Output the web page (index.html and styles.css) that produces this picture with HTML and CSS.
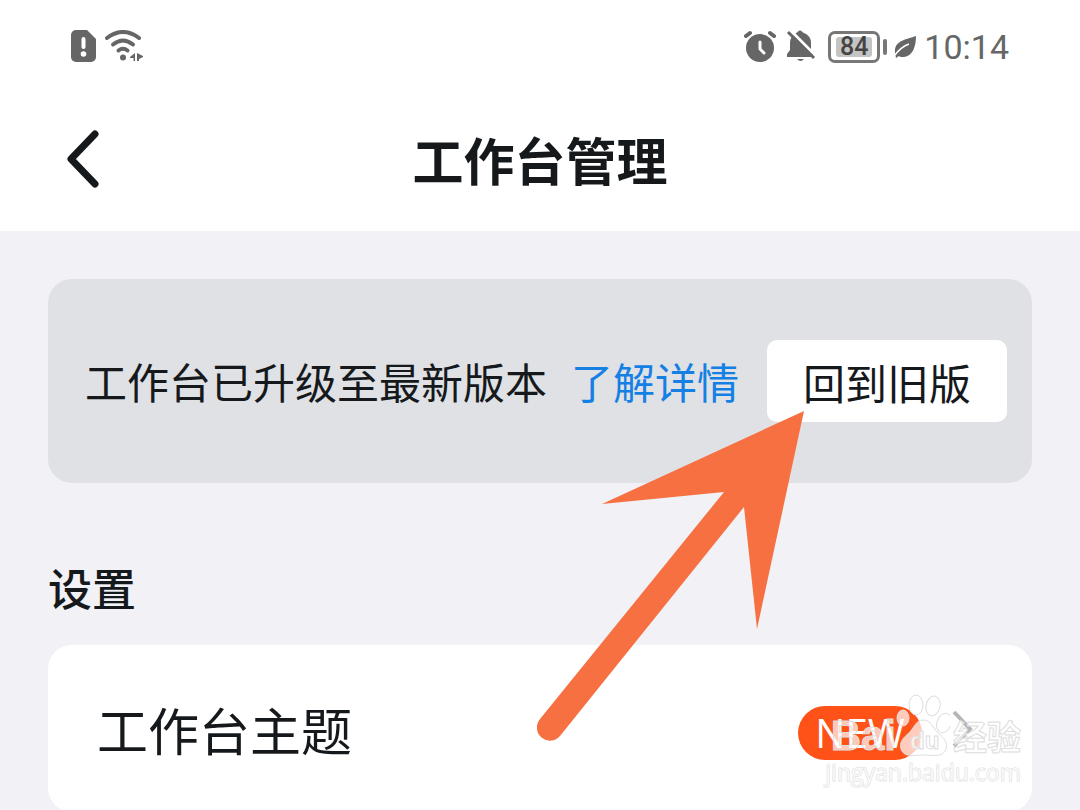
FILE: index.html
```
<!DOCTYPE html>
<html lang="zh-CN">
<head>
    <meta charset="UTF-8">
    <meta name="viewport" content="width=device-width, initial-scale=1.0">
    <title>工作台管理</title>
    <link rel="stylesheet" href="styles.css">
</head>
<body>
    <header class="top">
        <div class="status-bar">
            <div class="status-left">
                <svg width="26" height="34" viewBox="0 0 26 34" aria-hidden="true">
                    <path fill="#666" d="M5 0h11l9 9v18a5 5 0 0 1-5 5H5a5 5 0 0 1-5-5V5a5 5 0 0 1 5-5z"/>
                    <path stroke="#fff" stroke-width="4" stroke-linecap="round" d="M12.500 9v8"/>
                    <circle cx="12.500" cy="24" r="2.800" fill="#fff"/>
                </svg>
                <svg width="38" height="34" viewBox="0 0 38 34" aria-hidden="true">
                    <g fill="none" stroke="#666" stroke-width="4" stroke-linecap="round">
                        <path d="M2 8Q18-4 34 8"/>
                        <path d="M8 14.500Q18 6.500 28 14.500"/>
                        <path d="M13.500 20.500q4.500-3.500 9 0"/>
                    </g>
                    <circle cx="18" cy="27.500" r="3" fill="#666"/>
                    <path fill="#666" d="M30 23v8h-1.500v-3H25v-1zM32 23l6 3v1l-4 2v2h-2z"/>
                </svg>
            </div>
            <div class="status-right">
                <svg width="34" height="34" viewBox="0 0 34 34" aria-hidden="true">
                    <circle cx="16" cy="18" r="14" fill="#666"/>
                    <path stroke="#666" stroke-width="4" stroke-linecap="round" d="M2 6l4-3M30 6l-4-3"/>
                    <path fill="none" stroke="#fff" stroke-width="3" stroke-linecap="round" stroke-linejoin="round" d="M16 12v7l4 4"/>
                </svg>
                <svg width="30" height="34" viewBox="0 0 30 34" aria-hidden="true">
                    <path fill="#666" d="M1 27v-3l3-4v-7q0-7 7-10.500q3-4 6 0 8 3 8 10.500v8l2 3v3z"/>
                    <path fill="#666" d="M11 29h7q-3.500 4-7 0z"/>
                    <path stroke="#fff" stroke-width="3" d="M4 0l26 26"/>
                    <path stroke="#666" stroke-width="3" d="M2 2l26 26"/>
                </svg>
                <span class="battery"><span class="battery-level">84</span></span>
                <svg class="leaf" width="22" height="24" viewBox="0 0 22 24" aria-hidden="true">
                    <path fill="#666" d="M1 18C0 6 10 5 22 1c0 10-3 20-12 21-3 0-4 0-5-1L2 23z"/>
                    <path fill="none" stroke="#fff" stroke-width="1.600" d="M1 20Q7 12 15 9"/>
                </svg>
                <time class="clock">10:14</time>
            </div>
        </div>
        <div class="nav">
            <button type="button" class="back" aria-label="返回">
                <svg width="36" height="58" viewBox="0 0 36 58" aria-hidden="true">
                    <path fill="none" stroke="#16191c" stroke-width="7" stroke-linecap="round" stroke-linejoin="round" d="M31 4L7 29l24 25"/>
                </svg>
            </button>
            <h1>工作台管理</h1>
        </div>
    </header>

    <main>
        <section class="notice">
            <p>工作台已升级至最新版本</p>
            <a href="#">了解详情</a>
            <button type="button" class="old-version">回到旧版</button>
            <svg class="arrow" width="268" height="330" viewBox="0 0 268 330" aria-hidden="true">
                <path fill="#f77041" d="M267 0L65 93l122-12L3 308a13 13 0 0 0 20 17L207 96l13 122z"/>
            </svg>
        </section>

        <h2>设置</h2>
        <section class="card">
            <a class="row" href="#">
                <span>工作台主题</span>
                <span class="new">NEW</span>
                <svg width="21" height="40" viewBox="0 0 21 40" aria-hidden="true">
                    <path fill="none" stroke="#b4b6b8" stroke-width="4" d="M2 3l16 17L2 37"/>
                </svg>
            </a>
            <div class="watermark">
                <div class="brand">
                    <span class="bai">Bai</span>
                    <span class="paw">
                        <svg width="54" height="64" viewBox="0 0 54 64" aria-hidden="true">
                            <g fill="#fff" fill-opacity=".7" stroke="#ddd">
                                <ellipse cx="7" cy="24" rx="6" ry="8"/>
                                <ellipse cx="20" cy="11" rx="7" ry="10"/>
                                <ellipse cx="37" cy="12" rx="7" ry="10" transform="rotate(12 37 12)"/>
                                <ellipse cx="48" cy="29" rx="7" ry="10" transform="rotate(20 48 29)"/>
                                <path d="M27 26c8 0 10 8 15 13 6 5 10 9 8 16-3 9-13 6-23 6-9 0-19 3-22-6-2-7 3-12 8-16 5-5 7-13 14-13z"/>
                            </g>
                        </svg>
                        <span class="du">du</span>
                    </span>
                    <span class="jingyan">经验</span>
                </div>
                <div class="site">jingyan.baidu.com</div>
            </div>
        </section>
    </main>
</body>
</html>
```

FILE: styles.css
```
* {
    box-sizing: border-box;
}
body {
    margin: 0;
    background-color: #f1f1f6;
    color: #16191c;
    font-family: "Noto Sans CJK SC", sans-serif;
}
h1, h2, p {
    margin: 0;
}
a {
    text-decoration: none;
}
button {
    border: none;
    padding: 0;
    color: inherit;
    font-family: inherit;
    cursor: pointer;
}
svg {
    display: block;
    flex: none;
}

/* status bar and title */
.top {
    background-color: #fff;
}
.status-bar {
    display: flex;
    justify-content: space-between;
    height: 94px;
    padding: 0 71px;
    color: #666;
}
.status-left, .status-right {
    display: flex;
    align-items: center;
    gap: 8px;
}
.battery {
    position: relative;
    width: 52px;
    height: 32px;
    margin-left: 4px;
    padding: 3px;
    border: 3px solid #777;
    border-radius: 7px;
}
.battery::after {
    content: "";
    position: absolute;
    top: 5px;
    right: -10px;
    width: 4px;
    height: 16px;
    border-radius: 2px;
    background-color: #777;
}
.battery-level {
    display: block;
    width: 36px;
    margin: 0 auto;
    border-radius: 3px;
    background-color: #c4c4c4;
    color: #444;
    font: 500 25px/20px Roboto, sans-serif;
    text-align: center;
}
.leaf {
    margin-left: 6px;
}
.clock {
    font: 400 34px/40px Roboto, sans-serif;
}
.nav {
    display: grid;
    grid-template-columns: 120px 1fr 120px;
    align-items: center;
    height: 137px;
    padding-bottom: 8px;
}
.back {
    margin-left: 64px;
    width: 36px;
    background: none;
}
h1 {
    font-size: 51px;
    line-height: 72px;
    font-weight: 700;
    text-align: center;
}

main {
    padding: 48px;
}

/* upgrade notice */
.notice {
    position: relative;
    display: flex;
    align-items: center;
    height: 204px;
    padding: 0 25px 0 37px;
    border-radius: 24px;
    background-color: #dfe1e5;
    font-size: 42px;
    line-height: 60px;
    white-space: nowrap;
}
.notice a {
    margin-left: 24px;
    color: #1480e4;
}
.old-version {
    width: 240px;
    height: 82px;
    margin-left: auto;
    border-radius: 10px;
    background-color: #fff;
    font-size: 42px;
}
.arrow {
    position: absolute;
    top: 132px;
    right: 227px;
    z-index: 1;
    pointer-events: none;
}

/* settings */
h2 {
    margin-top: 72px;
    margin-bottom: 26px;
    font-size: 44px;
    line-height: 64px;
    font-weight: 500;
}
.card {
    position: relative;
    border-radius: 24px;
    background-color: #fff;
}
.row {
    display: flex;
    align-items: center;
    height: 167px;
    padding: 0 59px 0 49px;
    color: inherit;
    font-size: 51px;
}
.new {
    width: 124px;
    margin-top: 8px;
    margin-left: auto;
    margin-right: 30px;
    border-radius: 27px;
    background-color: #ff5219;
    color: #fff;
    font: 500 40px/54px "Open Sans", sans-serif;
    text-align: center;
}
.watermark {
    position: absolute;
    right: 11px;
    bottom: 26px;
    color: rgba(255, 255, 255, 0.7);
    -webkit-text-stroke: 1px #ddd;
    pointer-events: none;
}
.brand {
    display: flex;
    justify-content: flex-end;
    align-items: flex-end;
    height: 64px;
    font: 700 42px/44px "Liberation Sans", sans-serif;
}
.paw {
    position: relative;
}
.du {
    position: absolute;
    left: 14px;
    bottom: 2px;
    font-size: 24px;
    line-height: 30px;
}
.jingyan {
    margin-left: 3px;
    font: 700 34px/44px "Noto Sans CJK SC", sans-serif;
}
.site {
    font: 400 23px/28px "Open Sans", sans-serif;
    text-align: right;
    paint-order: stroke;
}
```
